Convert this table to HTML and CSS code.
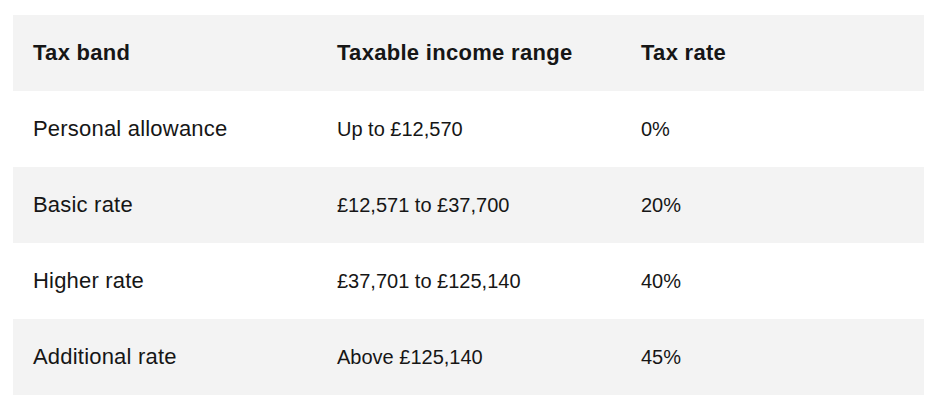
FILE: index.html
```html
<!DOCTYPE html>
<html lang="en">
<head>
<meta charset="utf-8">
<title>Income tax bands</title>
<link rel="stylesheet" href="styles.css">
</head>
<body>
<div class="wrap">
<table class="tax-table">
  <thead>
    <tr><th>Tax band</th><th>Taxable income range</th><th>Tax rate</th></tr>
  </thead>
  <tbody>
    <tr><td class="band">Personal allowance</td><td class="range">Up to £12,570</td><td class="rate">0%</td></tr>
    <tr><td class="band">Basic rate</td><td class="range">£12,571 to £37,700</td><td class="rate">20%</td></tr>
    <tr><td class="band">Higher rate</td><td class="range">£37,701 to £125,140</td><td class="rate">40%</td></tr>
    <tr><td class="band">Additional rate</td><td class="range">Above £125,140</td><td class="rate">45%</td></tr>
  </tbody>
</table>
</div>
</body>
</html>
```
FILE: styles.css
```css
html, body {
  margin: 0;
  padding: 0;
  background: #ffffff;
}
.wrap {
  padding: 15px 14px 0 13px;
}
.tax-table {
  width: 911px;
  border-collapse: collapse;
  table-layout: fixed;
  font-family: "Liberation Sans", Arial, sans-serif;
  font-size: 21px;
  color: #161616;
}
.tax-table th,
.tax-table td {
  height: 76px;
  padding: 0 20px;
  text-align: left;
  vertical-align: middle;
  box-sizing: border-box;
}
.tax-table th {
  font-weight: 700;
  font-size: 22px;
  letter-spacing: 0.3px;
}
.tax-table .band {
  font-size: 22px;
  letter-spacing: 0.2px;
}
.tax-table .range,
.tax-table .rate {
  font-size: 20px;
}
.tax-table th:nth-child(1),
.tax-table th:nth-child(2) {
  width: 304px;
}
.tax-table thead tr,
.tax-table tbody tr:nth-child(even) {
  background: #f3f3f3;
}
```
